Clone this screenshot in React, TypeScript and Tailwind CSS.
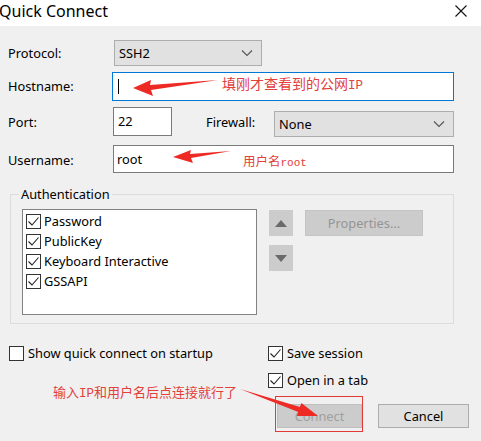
import React from "react";

const Check = ({ checked = true }: { checked?: boolean }) => (
  <span className="w-[15px] h-[15px] border border-[#333333] bg-white flex items-center justify-center shrink-0">
    {checked && (
      <svg width="13" height="13" viewBox="0 0 13 13">
        <path d="M1.5 6.5 L5 10 L11.5 2.5" fill="none" stroke="#222" strokeWidth="1.1" />
      </svg>
    )}
  </span>
);

const Chevron = () => (
  <svg width="12" height="8" viewBox="0 0 12 8">
    <path d="M1 1.5 L6 6.5 L11 1.5" fill="none" stroke="#555" strokeWidth="1.1" />
  </svg>
);

export default function App() {
  return (
    <div className="w-[481px] h-[441px] bg-[#f0f0f0] relative overflow-hidden font-['Noto_Sans',sans-serif] text-[12.8px] text-black leading-none">
      {/* title bar */}
      <div className="h-[26px] bg-white flex items-center justify-between">
        <span className="text-[16px] leading-none -ml-[1px] -mt-[4px]">Quick Connect</span>
        <svg className="mr-[14px] -mt-[4px]" width="12" height="12" viewBox="0 0 12 12">
          <path d="M0.5 0.5 L11.5 11.5 M11.5 0.5 L0.5 11.5" stroke="#111" strokeWidth="1.1" />
        </svg>
      </div>

      {/* form */}
      <div className="pl-[8px] pt-[14px] flex flex-col">
        <div className="flex items-center h-[26px]">
          <span className="w-[106px]">Protocol:</span>
          <div className="w-[148px] h-[26px] bg-[#e1e1e1] border border-[#adadad] flex items-center justify-between pl-[4px] pr-[8px]">
            <span>SSH2</span>
            <Chevron />
          </div>
        </div>
        <div className="flex items-center h-[29px] mt-[6px]">
          <span className="w-[104px]">Hostname:</span>
          <div className="w-[342px] h-[29px] bg-white border border-[#0078d7] flex items-center pl-[5px]">
            <span className="w-[1px] h-[15px] bg-black" />
          </div>
        </div>
        <div className="flex items-center h-[29px] mt-[7px]">
          <span className="w-[105px]">Port:</span>
          <div className="w-[59px] h-[29px] bg-white border border-[#7a7a7a] flex items-center pl-[4px] -mt-[2px]">
            22
          </div>
          <span className="ml-[34px] w-[68px]">Firewall:</span>
          <div className="w-[180px] h-[26px] self-end bg-[#e1e1e1] border border-[#adadad] flex items-center justify-between pl-[4px] pr-[8px]">
            <span>None</span>
            <Chevron />
          </div>
        </div>
        <div className="flex items-center h-[28px] mt-[9px]">
          <span className="w-[105px]">Username:</span>
          <div className="w-[341px] h-[28px] bg-white border border-[#7a7a7a] flex items-center pl-[3px] -mt-[2px]">
            root
          </div>
        </div>
      </div>

      {/* authentication group */}
      <div className="ml-[10px] mt-[20px] w-[444px] h-[130px] border border-[#dcdcdc] relative flex pl-[11px] pt-[14px]">
        <span className="absolute -top-[9px] left-[8px] bg-[#f0f0f0] px-[2px] leading-[16px]">Authentication</span>
        <div className="w-[235px] h-[106px] bg-white border border-[#828282] flex flex-col pl-[3px] pt-[4px] gap-[5px]">
          {["Password", "PublicKey", "Keyboard Interactive", "GSSAPI"].map((t) => (
            <div key={t} className="flex items-center h-[15px]">
              <Check />
              <span className="ml-[3px]">{t}</span>
            </div>
          ))}
        </div>
        <div className="ml-[12px] flex flex-col gap-[9px] pt-[1px]">
          <div className="w-[24px] h-[26px] bg-[#cccccc] flex items-center justify-center">
            <svg width="12" height="7" viewBox="0 0 12 7"><path d="M0 7 L6 0 L12 7 Z" fill="#6a6a6a" /></svg>
          </div>
          <div className="w-[24px] h-[26px] bg-[#cccccc] flex items-center justify-center">
            <svg width="12" height="7" viewBox="0 0 12 7"><path d="M0 0 L6 7 L12 0 Z" fill="#6a6a6a" /></svg>
          </div>
        </div>
        <div className="ml-[12px] pt-[1px]">
          <div className="w-[118px] h-[26px] bg-[#cccccc] border border-[#c4c4c4] flex items-center justify-center text-[#959595]">
            Properties...
          </div>
        </div>
      </div>

      {/* bottom */}
      <div className="flex mt-[22px]">
        <div className="pl-[9px] w-[268px]">
          <div className="flex items-center h-[15px]">
            <Check checked={false} />
            <span className="ml-[4px]">Show quick connect on startup</span>
          </div>
        </div>
        <div className="flex flex-col">
          <div className="flex items-center h-[15px]">
            <Check />
            <span className="ml-[4px]">Save session</span>
          </div>
          <div className="flex items-center h-[15px] mt-[12px]">
            <Check />
            <span className="ml-[4px]">Open in a tab</span>
          </div>
          <div className="flex mt-[16px] ml-[9px] gap-[16px]">
            <div className="w-[85px] h-[24px] bg-[#cccccc] border border-[#bfbfbf] flex items-center justify-center text-[#a0a0a0]">
              Connect
            </div>
            <div className="w-[91px] h-[24px] bg-[#e1e1e1] border border-[#adadad] flex items-center justify-center">
              Cancel
            </div>
          </div>
        </div>
      </div>

      {/* annotations */}
      <svg className="absolute inset-0 pointer-events-none" width="481" height="441" viewBox="0 0 481 441">
        <polygon points="133,88 151,80 150,85 218,80 151,90 153,96" fill="#ee2a24" />
        <polygon points="173,157 191,150 190,154 231,151 191,158 193,163" fill="#ee2a24" />
        <polygon points="318,416 301.4,402.9 299.9,407.1 240,389 298.3,411.9 296.8,416.1" fill="#ee2a24" />
        <rect x="275.5" y="396.5" width="87" height="35" fill="none" stroke="#e23b36" strokeWidth="1" />
      </svg>
      <span className="absolute left-[222px] top-[76px] text-[14px] text-[#e2403b] font-['Noto_Sans_CJK_SC',sans-serif] leading-none whitespace-nowrap">
        填刚才查看到的公网<span className="font-['Liberation_Mono',monospace] text-[12.5px]">IP</span>
      </span>
      <span className="absolute left-[243px] top-[155px] text-[12.5px] text-[#e2403b] font-['Noto_Sans_CJK_SC',sans-serif] leading-none whitespace-nowrap">
        用户名<span className="font-['Liberation_Mono',monospace] text-[11px]">root</span>
      </span>
      <span className="absolute left-[53px] top-[385px] text-[13px] text-[#e2403b] font-['Noto_Sans_CJK_SC',sans-serif] leading-none whitespace-nowrap">
        输入<span className="font-['Liberation_Mono',monospace] text-[12.5px]">IP</span>和用户名后点连接就行了
      </span>
    </div>
  );
}
